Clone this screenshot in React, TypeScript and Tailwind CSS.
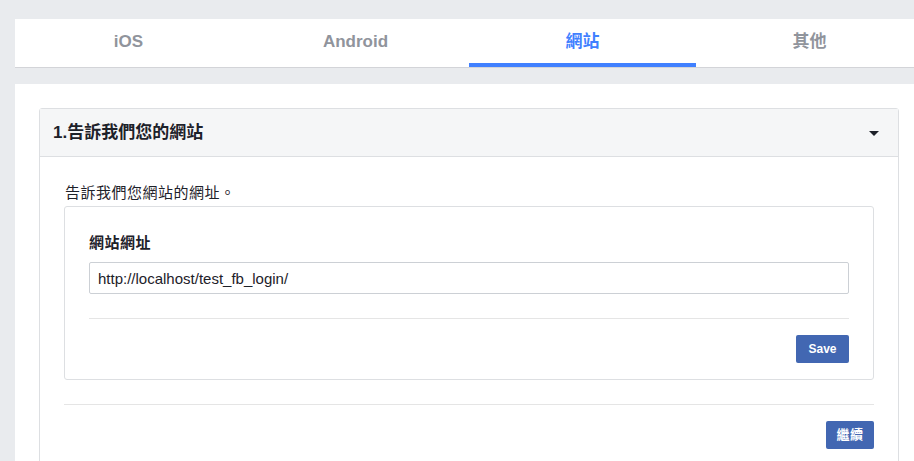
import { useState } from "react"

const tabs = ["iOS", "Android", "網站", "其他"]

export default function App() {
  const [active, setActive] = useState(2)
  const [url, setUrl] = useState("http://localhost/test_fb_login/")

  return (
    <div
      className="w-[914px] h-[461px] overflow-hidden bg-[#e9ebee] pl-[15px] pt-[19px]"
      style={{ fontFamily: '"Liberation Sans", "Noto Sans CJK TC", sans-serif' }}
    >
      {/* Tabs */}
      <div className="w-[908px] h-[49px] bg-white border-b border-[#d3d4d8] flex">
        {tabs.map((t, i) => (
          <button
            key={t}
            onClick={() => setActive(i)}
            className={`flex-1 relative flex items-center justify-center text-[17px] font-bold ${
              i === active ? "text-[#4080ff]" : "text-[#90949c]"
            }`}
          >
            <span className="-mt-[3px]">{t}</span>
            {i === active && (
              <span className="absolute left-0 right-0 bottom-0 h-[4px] bg-[#4080ff]" />
            )}
          </button>
        ))}
      </div>

      {/* Main panel */}
      <div className="w-[908px] mt-4 bg-white px-6 pt-6 min-h-[400px]">
        <div className="border border-[#dddfe2] rounded-t-[3px] min-h-[360px]">
          <div className="h-[48px] bg-[#f5f6f7] border-b border-[#dddfe2] flex items-center justify-between pl-[13px] pr-[19px]">
            <h2 className="text-[17px] font-bold text-[#1d2129]">1.告訴我們您的網站</h2>
            <svg width="10" height="6" viewBox="0 0 10 6" className="mt-[2px]">
              <path d="M0 0 L10 0 L5 5 Z" fill="#1d2129" />
            </svg>
          </div>

          <div className="px-6 pt-[24px]">
            <p className="text-[15px] tracking-[0.5px] leading-[24px] text-[#1d2129] pl-[1px]">告訴我們您網站的網址。</p>

            <div className="mt-[1px] border border-[#dddfe2] rounded-[3px] px-6 pt-[27px] pb-[16px]">
              <label className="block text-[15px] tracking-[0.5px] leading-[18px] font-bold text-[#1d2129]">網站網址</label>
              <input
                value={url}
                onChange={(e) => setUrl(e.target.value)}
                className="mt-[10px] w-full h-[32px] border border-[#ccd0d5] rounded-[2px] px-[8px] text-[15px] text-[#1d2129] outline-none"
              />
              <div className="mt-[24px] border-t border-[#e5e5e5]" />
              <div className="flex justify-end mt-[16px]">
                <button className="h-[28px] w-[53px] bg-[#4267b2] rounded-[2px] text-white text-[12px] font-bold">
                  Save
                </button>
              </div>
            </div>

            <div className="mt-[24px] border-t border-[#e5e5e5]" />
            <div className="flex justify-end mt-[16px]">
              <button className="h-[28px] w-[48px] bg-[#4267b2] rounded-[2px] text-white text-[13px] tracking-[0.5px] font-bold">
                繼續
              </button>
            </div>
          </div>
        </div>
      </div>
    </div>
  )
}
